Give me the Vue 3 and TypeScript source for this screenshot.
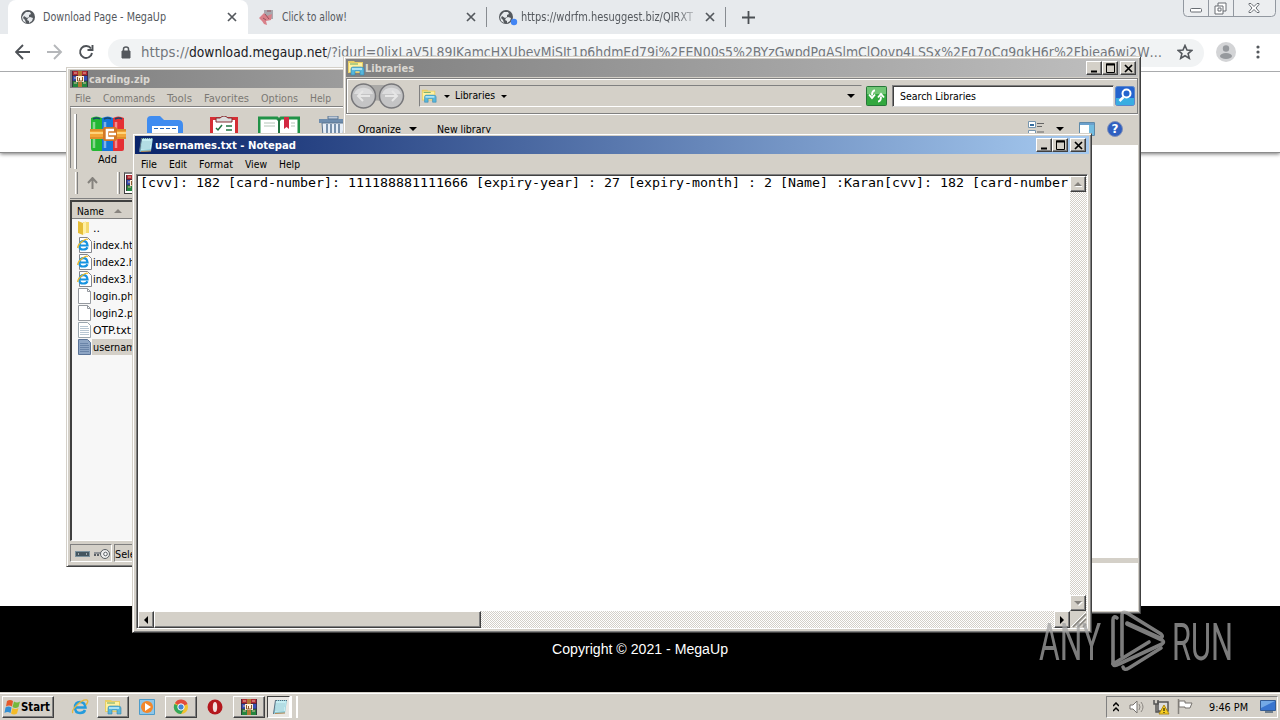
<script setup lang="ts">
import { h, type FunctionalComponent } from 'vue'

interface TxtProps { t: string; w: number; s?: number }

/* A line of text fitted to a fixed advance width. */
const Txt: FunctionalComponent<TxtProps> = (p) => {
  const s = p.s ?? 11
  return h('svg', { width: p.w, height: s + 3, style: { display: 'block', overflow: 'visible', flex: 'none' } }, [
    h('text', { x: 0, y: s, 'font-size': s, textLength: p.w, lengthAdjust: 'spacingAndGlyphs', fill: 'currentColor', 'xml:space': 'preserve' }, p.t),
  ])
}
Txt.props = ['t', 'w', 's']

interface IconProps { n: string; w: number; h?: number }
const Icon: FunctionalComponent<IconProps> = (p) =>
  h('svg', { width: p.w, height: p.h ?? p.w, style: { display: 'block', flex: 'none' } }, [h('use', { href: '#' + p.n, width: p.w, height: p.h ?? p.w })])
Icon.props = ['n', 'w', 'h']

interface Item { t: string; w: number }
const rarMenu: Item[] = [
  { t: 'File', w: 16 }, { t: 'Commands', w: 52 }, { t: 'Tools', w: 25 },
  { t: 'Favorites', w: 45 }, { t: 'Options', w: 37 }, { t: 'Help', w: 21 },
]
const padMenu: Item[] = [
  { t: 'File', w: 16 }, { t: 'Edit', w: 18 }, { t: 'Format', w: 34 }, { t: 'View', w: 22 }, { t: 'Help', w: 21 },
]
const files: { t: string; w: number; i: string; sel?: boolean }[] = [
  { t: '..', w: 7, i: 'fold' },
  { t: 'index.html', w: 52, i: 'ie-file' },
  { t: 'index2.html', w: 58, i: 'ie-file' },
  { t: 'index3.html', w: 58, i: 'ie-file' },
  { t: 'login.php', w: 47, i: 'blank' },
  { t: 'login2.php', w: 53, i: 'blank' },
  { t: 'OTP.txt', w: 38, i: 'lined' },
  { t: 'usernames.txt', w: 70, i: 'lined-sel', sel: true },
]
const record = '[cvv]: 182 [card-number]'
const line = record + ': 111188881111666 [expiry-year] : 27 [expiry-month] : 2 [Name] :Karan' + record
const urlRest = '/?idurl=0lixLaV5L89JKamcHXUbeyMjSIt1p6hdmEd79i%2FEN00s5%2BYzGwpdPqASlmClQovp4LSSx%2Fq7oCq9qkH6r%2Fbjea6wi2W…'
</script>

<template>
  <div class="desk">
    <svg class="defs" width="0" height="0">
      <symbol id="globe" viewBox="0 0 14 14"><circle cx="7" cy="7" r="7" fill="#54585d" /><path d="M5 2l4 0 1 2-2 1 0 2-2 1-3-2-1 2 2 2 1 3-3-2-1-4 2-3zM9 7l3 1-1 3-3 2 0-2-2-1 1-2z" fill="#e7eaed" /></symbol>
      <symbol id="x" viewBox="0 0 10 10"><path d="M1 1l8 8M9 1l-8 8" stroke="#54585d" stroke-width="1.700" /></symbol>
      <symbol id="rar" viewBox="0 0 16 16">
        <path d="M0 0h16v5H0z" fill="#b12a35" /><path d="M0 5h16v5H0z" fill="#3450b5" /><path d="M0 10h16v6H0z" fill="#24863e" />
        <path d="M0 4.500h16M0 10h16M.5 0v16M15.500 0v16" stroke="#33243a" stroke-width=".7" /><path d="M2 2h3M2 12h3M11 2h3M11 12h3M2 7h2" stroke="#e6b9a0" />
        <path d="M6 0h4v16H6z" fill="#b27833" /><path d="M4 5h8v6H4z" fill="#fff0d9" /><path d="M5.500 6v4h2V7m0 3h3V6" stroke="#8a5a30" fill="none" />
      </symbol>
      <symbol id="books" viewBox="0 0 36 36">
        <path d="M1 2q5-3 11 0v33H3q-2 0-2-3z" fill="#24b733" /><path d="M12 2q6-3 11 0v33H12z" fill="#1676d9" /><path d="M23 2q5-3 11 0v31q0 2-2 2h-9z" fill="#e53035" />
        <path d="M3 3q4-2 7 0M14 3q4-2 7 0M25 3q4-2 7 0" stroke="#17476b" fill="none" stroke-width="1.500" /><path d="M4 6v26M15 6v26M26 6v26" stroke="#fff" opacity=".45" stroke-width="2.500" />
        <path d="M0 13h36v10H0z" fill="#f2a436" /><path d="M0 14h36M0 22h36" stroke="#c97a20" /><path d="M0 17h36" stroke="#ffd37a" stroke-width="2" /><rect x="13" y="11" width="14" height="14" rx="2" fill="#d27725" /><path d="M24 14h-7v8h7M19 18h7" fill="none" stroke="#fff" stroke-width="2.600" />
      </symbol>
      <symbol id="lib" viewBox="0 0 18 16">
        <path d="M1 1h6l1 1h8v11H1z" fill="#e8ce65" /><path d="M2 3h13v9H2z" fill="#fff1a0" /><path d="M3 4h8" stroke="#6aa764" /><path d="M4 15V9q0-2 2-2h8q3 0 3 2v6h-4v-4H8v4z" fill="#56b7dc" stroke="#3784ad" stroke-width=".6" /><path d="M5 9h10" stroke="#c9f1fc" stroke-width="1.500" />
      </symbol>
      <symbol id="pad" viewBox="0 0 16 16"><path d="M4 1h11l-2 13-12 1z" fill="#8ecbd8" /><path d="M4 2h10l-1 10-10 1z" fill="#c6edf1" /><path d="M4 5h9M4 7h9M3 9h9M3 11h9" stroke="#86b9c8" stroke-width=".6" /><path d="M3.500 1l-2 14" stroke="#5e7383" /><path d="M4 1.500h11" stroke="#556c7b" stroke-dasharray="1 1" /><path d="M3 14.500l10-.5" stroke="#b58a56" /></symbol>
      <symbol id="ie" viewBox="0 0 18 18"><path d="M4.500 9.500h10Q14 4 9 4T4 9.500 9 15q4 0 5-3" fill="none" stroke="#249bdc" stroke-width="2.500" /><path d="M2 15Q0 13 6 7t10-5q2 1-1 5" fill="none" stroke="#e6b73d" stroke-width="1.300" /></symbol>
      <symbol id="ie-file" viewBox="0 0 15 16"><path d="M2.500.5h8l4 4v11h-12z" fill="#fff" stroke="#84868c" /><path d="M2.500 8.500h8Q10 4.200 6.500 4.200T2.500 8.500t4 4q3 0 4-2.200" fill="none" stroke="#1693e0" stroke-width="2.200" /><path d="M.7 11q0-3 4.300-6.500t6-2" fill="none" stroke="#edb928" stroke-width="1.300" /></symbol>
      <symbol id="fold" viewBox="0 0 15 16"><path d="M1 1l5 2v12l-5-2z" fill="#e5bd37" /><path d="M6 2h6v11H6z" fill="#f5da71" /><path d="M6 3l3-2v12l-3 2z" fill="#fff0a3" /></symbol>
      <symbol id="blank" viewBox="0 0 15 16"><path d="M1.500.5h9l3 3v12h-12z" fill="#fff" stroke="#95999f" /><path d="M10.500.5v3h3" fill="none" stroke="#95999f" /></symbol>
      <symbol id="lined" viewBox="0 0 15 16"><path d="M1.500.5h9l3 3v12h-12z" fill="#fff" stroke="#9ba6ae" /><path d="M3 4.500h8M3 6.500h9M3 8.500h9M3 10.500h9M3 12.500h9" stroke="#b7c6d2" /></symbol>
      <symbol id="lined-sel" viewBox="0 0 15 16"><path d="M1.500.5h9l3 3v12h-12z" fill="#8ea5c4" stroke="#5b7498" /><path d="M3 4.500h8M3 6.500h9M3 8.500h9M3 10.500h9M3 12.500h9" stroke="#6a84a8" /></symbol>
      <symbol id="tri" viewBox="0 0 8 4"><path d="M0 0h8L4 4z" fill="#000" /></symbol>
      <symbol id="min" viewBox="0 0 13 11"><path d="M3 8.500h6" stroke="#000" stroke-width="2" /></symbol>
      <symbol id="max" viewBox="0 0 13 11"><path d="M2.500 1h8v8.500h-8z" fill="none" stroke="#000" /><path d="M2 1.500h9" stroke="#000" stroke-width="2" /></symbol>
      <symbol id="close" viewBox="0 0 13 11"><path d="M3 2l7 7M10 2l-7 7" stroke="#000" stroke-width="1.700" /></symbol>
    </svg>

    <div class="browser">
      <div class="tabs">
        <div class="tab on"><Icon n="globe" :w="14" /><Txt class="tt" t="Download Page - MegaUp" :w="123" :s="12" /><Icon class="tx" n="x" :w="10" /></div>
        <div class="tab two">
          <svg width="16" height="18"><path d="M5 2h9v9H5z" fill="#a9a7ad" /><path d="M0 10l5-5 3 3 5-2-1 6-5 1 1 4-3-1-2-3z" fill="#d98089" /><path d="M6 6l4 5M4 10l3 2M8 3h4" stroke="#96545e" /></svg>
          <Txt class="tt" t="Click to allow!" :w="65" :s="12" /><Icon class="tx" n="x" :w="10" />
        </div>
        <div class="tab three">
          <svg width="20" height="20"><use href="#globe" width="14" height="14" y="3" /><circle cx="15" cy="15" r="3.200" fill="#4285f4" /></svg>
          <Txt class="tt fade" t="https://wdrfm.hesuggest.biz/QIRXT" :w="172" :s="12" /><Icon class="tx" n="x" :w="10" />
        </div>
        <svg class="plus" width="13" height="13"><path d="M6.500 0v13M0 6.500h13" stroke="#4c5054" stroke-width="1.800" /></svg>
        <div class="caps">
          <svg width="94" height="18"><path d="M.5 0v12.500q0 4 4 4h84q4 0 4-4V0M25.500 0v16M50.500 0v16" fill="#eceef0" stroke="#9298a0" /><rect x="7.500" y="8.500" width="11" height="3.500" rx="1" fill="#fff" stroke="#686d73" /><path d="M35 3h8v8h-3v3h-8V6h3zM35 8h3v3h-3zM35 6h5v5" fill="#fff" stroke="#686d73" /><path d="M66 3.500l2 0 3 3 3-3h2v1l-3 3.500 3 3.500v1h-2l-3-3-3 3h-2v-1l3-3.500-3-3.500z" fill="#fff" stroke="#686d73" /></svg>
        </div>
      </div>
      <div class="tools">
        <svg class="nav" width="80" height="16"><g fill="none" stroke="#4e5257" stroke-width="1.900"><path d="M15 8H1M8 1L1 8l7 7" /><path d="M32 8h14M39 1l7 7-7 7" stroke="#b5b7ba" /><path d="M76 4.500A6 6 0 1 0 77 9" /><path d="M77.500 1v5h-5" /></g></svg>
        <div class="omni">
          <svg class="lock" width="10" height="13"><path d="M1 5h8v7H1z" fill="#54585d" stroke="#54585d" /><path d="M2.500 5V3q0-2 2.500-2t2.500 2v2" fill="none" stroke="#54585d" stroke-width="1.500" /></svg>
          <div class="url"><Txt class="dim" t="https://" :w="48" :s="14" /><Txt t="download.megaup.net" :w="138" :s="14" /><Txt class="dim" :t="urlRest" :w="835" :s="14" /></div>
          <svg class="star" width="16" height="16"><path d="M8 1.500l2 4.500 4.800.4-3.700 3.200 1.200 4.700L8 11.800l-4.300 2.500 1.200-4.700L1.200 6.400 6 6z" fill="none" stroke="#54585d" stroke-width="1.600" /></svg>
        </div>
        <svg class="ava" width="20" height="20"><circle cx="10" cy="10" r="10" fill="#d3d4d6" /><circle cx="10" cy="6.500" r="3.200" fill="#96999d" /><ellipse cx="10" cy="14" rx="6" ry="3" fill="#96999d" /></svg>
        <svg class="dots" width="4" height="14"><path d="M2 2h0M2 7h0M2 12h0" stroke="#54585d" stroke-width="3.200" stroke-linecap="round" /></svg>
      </div>
      <div class="head"></div>
      <div class="page"></div>
      <div class="foot"><Txt t="Copyright © 2021 - MegaUp" :w="176" :s="14" /></div>
    </div>

    <section class="win rarwin">
      <div class="bar gray"><Icon n="rar" :w="16" /><Txt t="carding.zip" :w="61" /></div>
      <div class="menu m1"><Txt v-for="m in rarMenu" :key="m.t" :t="m.t" :w="m.w" /></div>
      <div class="big">
        <div class="add"><Icon n="books" :w="36" /><Txt class="al" t="Add" :w="19" /></div>
        <svg class="ico i1" width="36" height="34"><path d="M0 4q0-4 4-4h9l4 4h14q5 0 5 5v22H0z" fill="#3f8cf0" /><path d="M5 10h26v20H5z" fill="#fff" /><path d="M7 12.500h22" stroke="#246bc1" stroke-dasharray="4 2" /></svg>
        <svg class="ico i2" width="28" height="34"><rect x="1.500" y="2.500" width="25" height="30" fill="#fff" stroke="#d52e34" stroke-width="3" /><path d="M6 6V2h4q4-4 8 0h4v4z" fill="#ddd" stroke="#832e32" /><path d="M6 12l2 2 4-5M16 10h6M16 14h6" stroke="#207541" stroke-width="1.500" fill="none" /></svg>
        <svg class="ico i3" width="42" height="34"><path d="M1 2h18l2 2 2-2h18v30H1z" fill="#fff" stroke="#219247" stroke-width="3" /><path d="M21 3v28" stroke="#237542" stroke-width="2" /><path d="M26 1h5v12l-2.500-2-2.500 2z" fill="#d32841" /><path d="M6 7h11M6 10h11M33 7h4M33 10h4" stroke="#b4c5b8" /></svg>
        <svg class="ico i4" width="28" height="34"><path d="M0 3h28v4H0z" fill="#6e8dae" /><path d="M9 0h10v3H9z" fill="#becada" stroke="#5d7691" /><path d="M3 7h22l-2 26H5z" fill="#e6eef7" stroke="#59728e" /><path d="M8 8v23M12 8v23M16 8v23M20 8v23" stroke="#7891ac" stroke-width="2" /></svg>
      </div>
      <div class="addr"><i class="grip"></i><svg width="11" height="12"><path d="M5.500 12V1M1 6l4.500-5L10 6" fill="none" stroke="#85827d" stroke-width="2" /></svg><i class="grip g2"></i><div class="field"><Icon n="rar" :w="16" /></div></div>
      <div class="list">
        <div class="lh"><Txt t="Name" :w="27" /><svg width="8" height="4"><path d="M0 4h8L4 0z" fill="#898580" /></svg></div>
        <div v-for="f in files" :key="f.t" class="row"><Icon :n="f.i" :w="15" :h="16" /><div class="fn" :class="{ sel: f.sel }"><Txt :t="f.t" :w="f.w" /></div></div>
      </div>
      <div class="status">
        <div class="sb s1"><svg width="38" height="15"><rect x="1.500" y="5.500" width="14" height="5" fill="#43555f" stroke="#7b929e" /><path d="M4 8h1M12 8h1" stroke="#fff" /><path d="M20 7h10M21 7v3M24 7v3" stroke="#5b6065" stroke-width="2" /><path d="M20 7h10" stroke="#ddd" stroke-width=".8" /><circle cx="31" cy="8" r="4.500" fill="#eee" stroke="#5b6065" /><circle cx="31.500" cy="8" r="1.800" fill="#fff" stroke="#5b6065" /></svg></div>
        <div class="sb s2"><Txt t="Selected" :w="42" /></div>
      </div>
    </section>

    <section class="win libwin">
      <div class="bar gray"><Icon n="lib" :w="18" :h="16" /><Txt t="Libraries" :w="49" />
        <div class="btns"><b><Icon n="min" :w="13" :h="11" /></b><b><Icon n="max" :w="13" :h="11" /></b><b class="c"><Icon n="close" :w="13" :h="11" /></b></div>
      </div>
      <div class="band">
        <svg width="55" height="28"><path d="M13 3h28v18q-14-5-28 0z" fill="#aaa9a7" /><g stroke="#77777a" stroke-width="1.500" fill="#c4c4c5"><circle cx="13.500" cy="14" r="12" /><circle cx="41.500" cy="14" r="12" /></g><path d="M4 12a10 9 0 0 1 19 0zM32 12a10 9 0 0 1 19 0z" fill="#dcdcdd" /><path d="M20 14H8m5-5l-5 5 5 5M35 14h12m-5-5l5 5-5 5" fill="none" stroke="#e6e6e6" stroke-width="2" /></svg>
        <div class="path"><Icon n="lib" :w="16" :h="16" /><Icon class="ml" n="tri" :w="6" :h="3" /><Txt class="up1" t="Libraries" :w="40" /><Icon class="ml2" n="tri" :w="6" :h="3" /><Icon class="end" n="tri" :w="8" :h="4" /></div>
        <svg class="refresh" width="21" height="20"><rect x=".5" y=".5" width="20" height="19" rx="1" fill="#32a83f" stroke="#277739" /><path d="M1 1h19v7H1z" fill="#70c675" /><path d="M9 4.500q-3 0-3 5M3 8.500l3 3.500 3-3.500M12 15.500q3 0 3-5M12 11.500l3-3.500 3 3.500" fill="none" stroke="#fff" stroke-width="1.900" /></svg>
        <div class="search"><Txt t="Search Libraries" :w="76" /></div>
        <svg class="mag" width="20" height="20"><rect x=".5" y=".5" width="19" height="19" rx="2" fill="#2463ce" stroke="#5b86cb" /><path d="M1 12h18v7H1z" fill="#39ade2" /><circle cx="11.500" cy="7.500" r="4" fill="none" stroke="#fff" stroke-width="2" /><path d="M8.500 11l-4 4" stroke="#fff" stroke-width="2.500" /></svg>
      </div>
      <div class="org"><Txt t="Organize" :w="43" /><Icon class="o1" n="tri" :w="8" :h="4" /><Txt class="o2" t="New library" :w="54" />
        <svg class="views" width="18" height="16"><path d="M.5.5h7v6h-7zM.5 9.500h7v6h-7z" fill="#fff" stroke="#7896ae" /><path d="M2 4h4" stroke="#356c9d" stroke-width="2" /><path d="M9 2.500h7M9 5.500h5M9 11h7" stroke="#656565" /></svg>
        <Icon class="o3" n="tri" :w="8" :h="4" />
        <svg class="pane" width="16" height="14"><path d="M.5.5h15v13H.5z" fill="#fff" stroke="#5f8aa9" /><path d="M1 2h14" stroke="#6ba0cc" stroke-width="2" /><path d="M10 3h5v10h-5z" fill="#72bce0" /></svg>
        <div class="help">?</div>
      </div>
      <div class="body"><div class="detail"></div></div>
    </section>

    <section class="win padwin">
      <div class="bar blue"><Icon n="pad" :w="16" /><Txt t="usernames.txt - Notepad" :w="141" />
        <div class="btns"><b><Icon n="min" :w="13" :h="11" /></b><b><Icon n="max" :w="13" :h="11" /></b><b class="c"><Icon n="close" :w="13" :h="11" /></b></div>
      </div>
      <div class="menu m2"><Txt v-for="m in padMenu" :key="m.t" :t="m.t" :w="m.w" /></div>
      <div class="edit">
        <div class="top">
          <div class="text"><Txt :t="line" :w="936" :s="13" /></div>
          <div class="vs"><b><svg width="8" height="5"><path d="M1 5h8L5 1z" fill="#fff" /><path d="M0 4h8L4 0z" fill="#85827d" /></svg></b><b><svg width="9" height="5"><path d="M1 1h8L5 5z" fill="#fff" /><path d="M0 0h8L4 4z" fill="#85827d" /></svg></b></div>
        </div>
        <div class="hs">
          <b><svg width="4" height="8"><path d="M4 0v8L0 4z" /></svg></b><div class="thumb"></div><b class="r"><svg width="4" height="8"><path d="M0 0v8l4-4z" /></svg></b>
          <svg class="size" width="17" height="17"><path d="M16 3L3 16M16 8l-8 8M16 13l-3 3" stroke="#85827d" stroke-width="1.500" /><path d="M16 1L1 16M16 6L6 16" stroke="#fff" /></svg>
        </div>
      </div>
    </section>

    <div class="mark">
      <Txt t="ANY" :w="62" :s="52" />
      <svg class="play" width="56" height="62" fill="none" stroke="currentColor" stroke-width="3.600" stroke-linejoin="round" stroke-linecap="round"><path d="M7 8q-4-3-4 2v44l36-22" /><path d="M3 54q1 3 6 0L52 34q3-2 0-4L17 14" /><path d="M12 46V5q0-4 5-2l34 21q3 3-1 4L17 13" /><path d="M13 57q1 4 6 1l32-20" /></svg>
      <Txt t="RUN" :w="61" :s="52" />
    </div>

    <div class="task">
      <div class="start"><svg width="17" height="16"><path d="M3 2q3-2 6 0L8 7.500q-3-2-6 0z" fill="#e5592a" /><path d="M10 2.500q3 2 6 0l-1.500 5.500q-3 2-6 0z" fill="#75b83d" /><path d="M1.500 8.500q3-2 6 0l-1 5.500q-3-2-6 0z" fill="#328fd4" /><path d="M8.500 9q3 2 6 0L13 14.500q-3 2-6 0z" fill="#f4bb28" /></svg><Txt t="Start" :w="29" :s="12" /></div>
      <div class="q t1"><Icon n="ie" :w="18" /></div>
      <div class="q up t2"><Icon n="lib" :w="18" /></div>
      <div class="q t3"><svg width="16" height="16"><path d="M.5.5h15v15H.5z" fill="#8fc6e8" stroke="#4d9cca" /><circle cx="8" cy="8" r="6" fill="#f3872a" /><path d="M6 4v8l6-4z" fill="#fff" /></svg></div>
      <div class="q up t2"><svg width="16" height="16"><circle cx="8" cy="8" r="7" fill="#f2c22f" /><path d="M8 8L2 4A7 7 0 0 1 14.500 5z" fill="#e24c3d" /><path d="M1.500 5A7 7 0 0 0 8 15l3-5-3-2z" fill="#34a85a" /><circle cx="8" cy="8" r="3.200" fill="#4285d4" stroke="#fff" /></svg></div>
      <div class="q t3"><svg width="16" height="16"><circle cx="8" cy="8" r="7.500" fill="#b4171d" /><ellipse cx="8" cy="8" rx="2.200" ry="5" fill="#f3dede" /></svg></div>
      <div class="q up t2"><Icon n="rar" :w="16" /></div>
      <div class="q down"><Icon n="pad" :w="16" /></div><i class="dg"></i>
      <div class="tray">
        <svg width="6" height="10"><path d="M0 4l3-3 3 3M0 9l3-3 3 3" fill="none" stroke="#000" stroke-width="1.500" /></svg>
        <svg class="y1" width="16" height="14"><path d="M1 5h3l4-4v12L4 9H1z" fill="#fff" stroke="#77736e" /><path d="M10 4q2 3 0 6M12 2q4 5 0 10" fill="none" stroke="#8b8782" /></svg>
        <svg class="y2" width="17" height="16"><path d="M5 3h10v9H5z" fill="#ddd" stroke="#555" stroke-width="1.500" /><path d="M1 1v4h4V1M3 5v8h4" fill="none" stroke="#555" stroke-width="1.500" /><path d="M11 6l5 9H6z" fill="#f7ce20" stroke="#b18a12" /><path d="M11 9v3M11 13v1" stroke="#000" /></svg>
        <svg class="y3" width="16" height="15"><path d="M1.500 0v15" stroke="#85827d" stroke-width="1.500" /><path d="M2 2h6v2h7l-2 5H8V8H2z" fill="#fff" stroke="#77736e" /></svg>
        <Txt class="clock" t="9:46 PM" :w="39" />
        <svg class="y4" width="16" height="13"><path d="M.5.5h15v10H.5z" fill="#3975cf" stroke="#345c95" /><path d="M1 1h14L1 8z" fill="#73a9e6" /><path d="M5 12h8" stroke="#6f7e8b" stroke-width="2" /></svg>
      </div>
    </div>
  </div>
</template>

<style>
body { margin: 0; overflow: hidden; background: #000; }
</style>

<style scoped>
.desk { position: relative; width: 1280px; height: 720px; overflow: hidden; font-family: "DejaVu Sans Condensed", "DejaVu Sans", "Noto Sans", sans-serif; font-size: 11px; color: #000; }
.defs { position: absolute; }
* { box-sizing: border-box; }
.browser { display: flex; flex-direction: column; height: 692px; background: #fff; }
.tabs { position: relative; display: flex; height: 34px; background: #e7eaed; padding-left: 8px; flex: none; align-items: center; color: #54585d; }
.tab { display: flex; align-items: center; height: 34px; flex: none; }
.tab .tt { margin-bottom: 2px; }
.tab .tx { margin-left: auto; }
.tab.on { width: 240px; background: #fff; border-radius: 8px 8px 0 0; padding: 0 11px 0 13px; }
.tab.on .tt { margin-left: 8px; }
.two { width: 239px; padding: 0 11px 0 11px; border-right: 1px solid transparent; }
.two .tt { margin-left: 7px; }
.two .tx { margin-right: -1px; }
.three { position: relative; width: 239px; padding: 0 11px 0 12px; }
.three::before { content: ""; width: 1px; height: 20px; background: #888c91; position: absolute; left: -1px; top: 7px; }
.three::after { content: ""; width: 1px; height: 20px; background: #888c91; position: absolute; right: 0; top: 7px; }
.three .tt { margin-left: 2px; }
.fade { mask-image: linear-gradient(90deg, #000 155px, rgba(0,0,0,.3) 172px); }
.plus { margin-left: 16px; }
.caps { position: absolute; right: 3px; top: 0; }
.tools { height: 38px; flex: none; display: flex; align-items: center; padding-left: 15px; border-bottom: 1px solid #a9abad; }
.tools > svg { margin-bottom: 1px; }
.omni { display: flex; align-items: center; margin-left: 13px; width: 1096px; height: 28px; border-radius: 14px; background: #f1f3f4; padding: 0 0 1px 13px; color: #202124; }
.url { display: flex; padding-bottom: 1px; }
.lock { margin-right: 10px; }
.dim { color: #73777c; }
.star { margin-left: 15px; }
.ava { margin-left: 12px; }
.dots { margin-left: 20px; }
.head { height: 81px; border-bottom: 1px solid #8b8b8b; box-shadow: 0 1px 4px rgba(0,0,0,.55); flex: none; clip-path: inset(0 0 -8px 0); }
.page { flex: 1; }
.foot { height: 86px; background: #000; color: #fff; display: flex; justify-content: center; padding-top: 34px; font-family: "Liberation Sans", sans-serif; }
.win { position: absolute; background: #d4d0c8; display: flex; flex-direction: column; border: 1px solid; border-color: #d4d0c8 #404040 #404040 #d4d0c8; box-shadow: inset 1px 1px #fff, inset -1px -1px #808080; padding: 2px; }
.rarwin { left: 66px; top: 67px; width: 640px; height: 500px; padding-left: 3px; }
.libwin { left: 343px; top: 56px; width: 798px; height: 558px; }
.padwin { left: 132px; top: 133px; width: 960px; height: 500px; }
.bar { display: flex; height: 18px; flex: none; align-items: center; font-weight: bold; padding-left: 2px; }
.gray { background: linear-gradient(90deg, #808080, #c0c0c0); color: #dad7d1; }
.blue { background: linear-gradient(90deg, #0a246a, #a6caf0); color: #fff; }
.padwin .bar { padding-left: 3px; }
.padwin .bar > svg:nth-child(2) { margin-left: 1px; }
.rarwin .bar > svg:nth-child(2) { margin-left: 1px; }
.libwin .bar { padding-left: 1px; }
.btns { display: flex; margin-left: auto; margin-right: 2px; }
.padwin .btns { margin-right: 3px; }
.btns b, .vs b, .hs b { display: flex; align-items: center; justify-content: center; width: 16px; height: 14px; background: #d4d0c8; border: 1px solid; border-color: #fff #404040 #404040 #fff; box-shadow: inset -1px -1px #808080; flex: none; }
.btns .c { margin-left: 2px; }
.menu { display: flex; align-items: center; flex: none; }
.m1 { height: 19px; padding: 2px 0 0 5px; gap: 12px; color: #7b7874; border-bottom: 1px solid #808080; }
.big { height: 61px; flex: none; display: flex; align-items: flex-start; border-top: 1px solid #fff; border-left: 1px solid #808080; padding: 6px 0 0 4px; }
.add { display: flex; flex-direction: column; align-items: center; width: 65px; height: 55px; gap: 0; border-left: 1px solid #fff; box-shadow: -1px 0 #fff, inset 1px 0 #808080; padding-top: 2px; }
.al { margin-left: -2px; }
.ico { flex: none; margin-top: 2px; }
.i1 { margin-left: 7px; } .i2 { margin-left: 27px; } .i3 { margin-left: 20px; } .i4 { margin-left: 19px; }
.addr { display: flex; height: 31px; align-items: center; flex: none; padding-left: 5px; border-bottom: 1px solid #808080; }
.grip { width: 3px; height: 22px; border-left: 1px solid #fff; border-right: 1px solid #808080; margin-right: 9px; flex: none; }
.g2 { margin-left: 19px; margin-right: 4px; }
.field { height: 22px; flex: 1; background: #fff; border: 1px solid #404040; border-top: 2px solid #808080; padding: 1px 0 0 1px; }
.list { margin-top: 1px; height: 341px; flex: none; border: 2px solid #404040; border-bottom: 1px solid #fff; background: #f7f7f7; overflow: hidden; }
.lh { height: 17px; display: flex; align-items: center; gap: 10px; padding: 1px 0 0 5px; background: #d4d0c8; border-bottom: 1px solid #808080; }
.row { display: flex; height: 17px; align-items: center; padding-left: 5px; }
.fn { height: 16px; display: flex; align-items: center; padding-left: 1px; padding-right: 2px; }
.sel { background: #d4d0c8; }
.status { display: flex; height: 18px; margin-top: 3px; gap: 2px; }
.sb { height: 18px; border: 1px solid; border-color: #808080 #fff #fff #808080; padding-top: 1px; }
.s1 { width: 42px; padding: 1px 0 0 3px; }
.s2 { flex: 1; padding-left: 0; padding-top: 2px; }
.band { display: flex; height: 36px; flex: none; margin-top: 1px; border: 1px solid #808080; box-shadow: inset 1px 1px #fff, 0 1px #fff; align-items: center; padding-left: 3px; }
.path { display: flex; align-items: center; width: 443px; height: 22px; border: 1px solid; border-color: #808080 #d4d0c8 #fff #808080; margin-left: 14px; padding-left: 1px; }
.up1 { margin-bottom: 2px; }
.ml { margin: 0 5px 0 7px; } .ml2 { margin-left: 6px; } .end { margin-left: auto; margin-right: 6px; }
.refresh { margin-left: 4px; }
.search { width: 222px; height: 22px; margin-left: 5px; background: #fff; border: 1px solid; border-color: #808080 #ddd #ddd #808080; box-shadow: inset 1px 1px #404040; padding: 3px 0 0 7px; }
.mag { margin-left: 1px; }
.org { display: flex; height: 31px; flex: none; align-items: center; padding: 0 0 2px 12px; }
.o1 { margin-left: 8px; } .o2 { margin-left: 20px; }
.views { margin-left: 537px; } .o3 { margin-left: 10px; } .pane { margin-left: 15px; }
.help { width: 16px; height: 16px; border-radius: 50%; background: #2f5fc0; border: 1px solid #8090b8; color: #fff; font: bold 12px/14px "DejaVu Sans", sans-serif; text-align: center; margin-left: 12px; }
.body { flex: 1; background: #fff; display: flex; flex-direction: column; justify-content: flex-end; }
.detail { height: 53px; border-top: 5px solid #d4d0c8; }
.m2 { height: 20px; padding-left: 6px; gap: 12px; }
.edit { flex: 1; display: flex; flex-direction: column; background: #fff; border: 1px solid; border-color: #808080 #fff #fff #808080; box-shadow: inset 1px 1px #404040; padding: 1px 0 0 1px; margin: 0 1px 1px; }
.top { display: flex; flex: 1; min-height: 0; }
.text { flex: 1; overflow: hidden; padding: 0 0 0 2px; font-family: "DejaVu Sans Mono", monospace; }
.text svg { margin-top: -2px; }
.vs, .hs { background: repeating-conic-gradient(#d4d0c8 0 25%, #fff 0 50%) 0 0 / 2px 2px; }
.vs { width: 17px; display: flex; flex-direction: column; justify-content: space-between; flex: none; }
.vs b { width: 16px; height: 16px; }
.hs { display: flex; height: 17px; flex: none; }
.hs b { width: 16px; height: 17px; }
.thumb { width: 327px; background: #d4d0c8; border: 1px solid; border-color: #fff #404040 #404040 #fff; box-shadow: inset -1px -1px #808080; }
.hs .r { margin-left: auto; }
.size { background: #d4d0c8; }
.mark { position: absolute; left: 1039px; top: 609px; display: flex; color: #a4a4a4; opacity: .76; font-family: Roboto, sans-serif; font-weight: 400; align-items: flex-start; }
.mark > svg { margin-top: -1px; }
.mark .play { margin: 1px 6px 0 9px; }
.task { position: absolute; left: 0; top: 692px; width: 1280px; height: 28px; background: #d4d0c8; border-top: 1px solid #d4d0c8; box-shadow: inset 0 1px #fff; display: flex; align-items: center; padding: 2px 2px 1px 2px; }
.start { display: flex; align-items: center; width: 52px; height: 22px; padding-left: 1px; border: 1px solid; border-color: #fff #404040 #404040 #fff; box-shadow: inset -1px -1px #808080; font-weight: bold; }
.start svg + svg { margin-bottom: 1px; }
.q { height: 22px; display: flex; align-items: center; justify-content: center; flex: none; }
.t1 { width: 43px; padding-left: 8px; }
.t2 { width: 32px; }
.t3 { width: 36px; }
.up { border: 1px solid; border-color: #fff #404040 #404040 #fff; box-shadow: inset -1px -1px #808080; }
.down { width: 23px; margin-left: 2px; padding-left: 2px; background: #eae8e4; border: 1px solid; border-color: #404040 #fff #fff #404040; }
.dg { width: 8px; height: 22px; border-left: 2px solid #fff; border-right: 2px solid #fff; flex: none; }
.tray { margin-left: auto; display: flex; align-items: center; width: 172px; height: 22px; border: 1px solid; border-color: #808080 #fff #fff #808080; padding: 0 0 1px 6px; }
.y1 { margin-left: 10px; } .y2 { margin-left: 8px; } .y3 { margin-left: 7px; } .clock { margin-left: 16px; } .y4 { margin-left: 12px; }
</style>
